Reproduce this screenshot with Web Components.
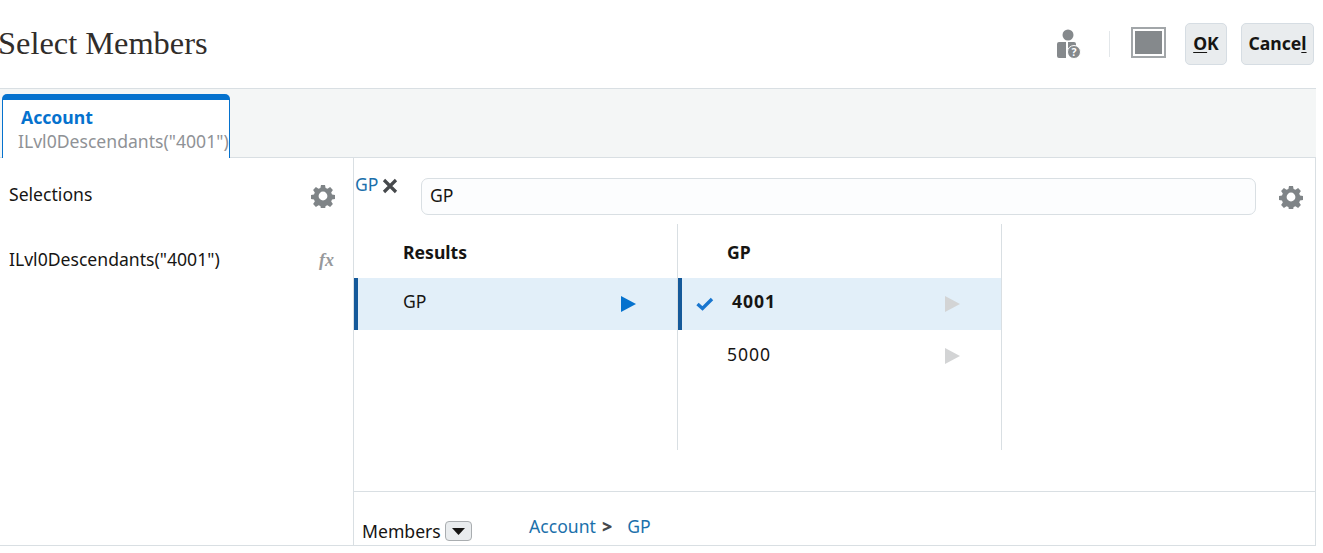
<!DOCTYPE html>
<html lang="en">
<head>
<meta charset="utf-8">
<title>Select Members</title>
<style>
  html, body { margin: 0; background: #fff; }
  body { width: 1323px; height: 553px; overflow: hidden; font: 17.6px "Noto Sans", sans-serif; color: #161513; }
</style>
</head>
<body>
<select-members></select-members>
<script>
const GEAR = `<svg width="24" height="24" viewBox="0 0 24 24"><path fill="#7f8487" fill-rule="evenodd" d="M10 1h4l.6 3 1.9.8 2.6-1.7 2.8 2.8-1.7 2.6.8 1.9 3 .6v4l-3 .6-.8 1.9 1.7 2.6-2.8 2.8-2.6-1.7-1.9.8-.6 3h-4l-.6-3-1.9-.8-2.6 1.7-2.8-2.8 1.7-2.6-.8-1.9-3-.6v-4l3-.6.8-1.9-1.7-2.6 2.8-2.8 2.6 1.7 1.9-.8zM12 7.6a4.4 4.4 0 1 0 0 8.8 4.4 4.4 0 0 0 0-8.8z"/></svg>`;

class SmButton extends HTMLElement {
  constructor() {
    super();
    this.attachShadow({ mode: 'open' }).innerHTML = `
      <style>
        :host { display: inline-flex; align-items: center; justify-content: center; box-sizing: border-box; height: 42px; padding: 0 0 3px; background: #e9ecee; border: 1px solid #d6dde3; border-radius: 5px; font: 700 17.6px "Noto Sans", sans-serif; color: #161513; }
      </style><slot></slot>`;
  }
}

class SmHeader extends HTMLElement {
  constructor() {
    super();
    this.attachShadow({ mode: 'open' }).innerHTML = `
      <style>
        :host { display: flex; align-items: center; box-sizing: border-box; height: 88px; padding: 0 2px 0 0; }
        h1 { margin: 0 auto 0 -2px; padding-bottom: 2px; font: 400 32.4px "Liberation Serif", Georgia, serif; color: #312d2a; }
        .help { display: block; margin-right: 27px; }
        .sep { width: 1px; height: 26px; background: #e3e7ea; margin-right: 21px; }
        .max { box-sizing: border-box; width: 35px; height: 31px; border: 2px solid #a2a6a9; padding: 2px; margin: 0 19px 3px 0; }
        .max div { height: 100%; background: #85898c; }
        .ok { width: 42px; margin-right: 14px; }
        .cancel { width: 73px; }
        u { text-underline-offset: 2px; }
      </style>
      <h1>Select Members</h1>
      <svg class="help" width="25" height="30" viewBox="0 0 25 30">
        <circle cx="11" cy="6" r="5.5" fill="#85898c"/>
        <path fill="#85898c" d="M0 15q0-2 2-2h7v16H2q-2 0-2-2zM11 13h6q2 0 2 2v4l-8 6z"/>
        <circle cx="17" cy="23" r="6.5" fill="#85898c" stroke="#fff" stroke-width="1"/>
        <text x="17" y="27" font-family="Noto Sans" font-size="10.5" font-weight="700" fill="#fff" text-anchor="middle">?</text>
      </svg>
      <div class="sep"></div>
      <div class="max"><div></div></div>
      <sm-button class="ok"><span><u>O</u>K</span></sm-button>
      <sm-button class="cancel"><span>Cance<u>l</u></span></sm-button>`;
  }
}

class SmTabs extends HTMLElement {
  constructor() {
    super();
    this.attachShadow({ mode: 'open' }).innerHTML = `
      <style>
        :host { display: flex; align-items: flex-end; box-sizing: border-box; height: 70px; padding-left: 2px; background: #f4f6f6; border-top: 1px solid #d9dfe3; border-bottom: 1px solid #d9dfe3; }
        .tab { box-sizing: border-box; width: 228px; height: 64px; margin-bottom: -1px; background: #fff; border: solid #0572ce; border-width: 6px 1px 0; border-radius: 5px 5px 0 0; line-height: 24px; white-space: nowrap; }
        .name { padding: 5px 0 0 18px; font-weight: 700; color: #0572ce; }
        .expr { padding-left: 15px; color: #8f9296; }
      </style>
      <div class="tab"><div class="name">Account</div><div class="expr">ILvl0Descendants("4001")</div></div>`;
  }
}

class SmSelections extends HTMLElement {
  constructor() {
    super();
    this.attachShadow({ mode: 'open' }).innerHTML = `
      <style>
        :host { display: block; box-sizing: border-box; width: 354px; padding: 26px 18px 0 9px; border-right: 1px solid #d9dfe3; }
        .row { display: flex; align-items: center; justify-content: space-between; height: 24px; }
        .row + .row { margin-top: 41px; }
        .first { padding-bottom: 4px; }
        .second { padding-bottom: 4px; }
        .fx { font: italic 700 18px "Liberation Serif", serif; color: #97999c; padding: 0 1px 2px 0; }
      </style>
      <div class="row"><span class="first">Selections</span>${GEAR}</div>
      <div class="row"><span class="second">ILvl0Descendants("4001")</span><span class="fx">fx</span></div>`;
  }
}

class SmSearch extends HTMLElement {
  constructor() {
    super();
    this.attachShadow({ mode: 'open' }).innerHTML = `
      <style>
        :host { display: flex; align-items: flex-start; box-sizing: border-box; height: 66px; padding: 14px 12px 0 1px; }
        .chip { display: flex; align-items: flex-start; width: 66px; height: 24px; line-height: 24px; color: #1b70ab; }
        .chip svg { margin: 6px 0 0 4px; }
        .box { flex: 1; box-sizing: border-box; height: 37px; margin: 6px 23px 0 0; padding: 0 8px; line-height: 33px; background: #fcfdfe; border: 1px solid #d9dfe3; border-radius: 7px; }
        .gear { margin-top: 13px; }
      </style>
      <div class="chip">GP<svg width="16" height="16" viewBox="0 0 16 16"><path stroke="#46494c" stroke-width="3.2" d="M2 2l12 12M14 2L2 14"/></svg></div>
      <div class="box">GP</div>
      <div class="gear">${GEAR}</div>`;
  }
}

class SmRow extends HTMLElement {
  constructor() {
    super();
    const on = this.hasAttribute('selected');
    const arrow = this.getAttribute('arrow') || '#d3d4d5';
    this.attachShadow({ mode: 'open' }).innerHTML = `
      <style>
        :host { display: flex; align-items: center; box-sizing: border-box; height: 52px; background: ${on ? '#e2eff9' : 'transparent'}; border-left: 4px solid ${on ? '#14599a' : 'transparent'}; }
        .mark { width: var(--mark-w, 45px); flex: none; display: flex; padding-left: 14px; box-sizing: border-box; }
        .text { flex: 1; padding-bottom: ${this.getAttribute('lift') || 6}px; }
        .arrow { margin-right: var(--arrow-r, 41px); }
      </style>
      <div class="mark"><slot name="mark"></slot></div>
      <div class="text"><slot></slot></div>
      <svg class="arrow" width="15" height="16" viewBox="0 0 15 16"><path fill="${arrow}" d="M0 0l15 8-15 8z"/></svg>`;
  }
}

class SmColumn extends HTMLElement {
  constructor() {
    super();
    this.attachShadow({ mode: 'open' }).innerHTML = `
      <style>
        :host { display: block; box-sizing: border-box; width: 324px; height: 226px; border-right: 1px solid #d9dfe3; }
        .head { height: 54px; box-sizing: border-box; padding: 15px 0 0 49px; line-height: 26px; font-weight: 700; }
      </style>
      <div class="head">${this.getAttribute('heading')}</div><slot></slot>`;
  }
}

class SmBreadcrumb extends HTMLElement {
  constructor() {
    super();
    this.attachShadow({ mode: 'open' }).innerHTML = `
      <style>
        :host { display: flex; align-items: flex-start; box-sizing: border-box; height: 54px; border-top: 1px solid #d9dfe3; padding: 22px 0 0 8px; line-height: 24px; }
        .label { width: 167px; display: flex; align-items: center; padding-top: 5px; height: 24px; }
        .drop { display: flex; align-items: center; justify-content: center; box-sizing: border-box; width: 27px; height: 20px; margin-left: 4px; background: #e9ecee; border: 1px solid #a9adb0; border-radius: 4px; }
        a { color: #1b70ab; }
        b { margin: 0 15px 0 6px; font-weight: 900; color: #46494c; }
      </style>
      <div class="label">Members<span class="drop"><svg width="13" height="7" viewBox="0 0 13 7"><path d="M0 0h13L6.5 7z" fill="#161513"/></svg></span></div>
      <a>Account</a><b>&gt;</b><a>GP</a>`;
  }
}

class SelectMembers extends HTMLElement {
  constructor() {
    super();
    this.attachShadow({ mode: 'open' }).innerHTML = `
      <style>
        :host { display: block; width: 1316px; }
        .main { display: flex; height: 387px; border-bottom: 1px solid #d9dfe3; border-right: 1px solid #d9dfe3; }
        .browser { flex: 1; display: flex; flex-direction: column; min-width: 0; }
        .cols { display: flex; flex: 1; align-items: flex-start; }
        .second { --mark-w: 50px; --arrow-r: 41px; }
        .strong { font-weight: 700; }
        .digits { letter-spacing: .9px; }
        .mark { display: block; }
      </style>
      <sm-header></sm-header>
      <sm-tabs></sm-tabs>
      <div class="main">
        <sm-selections></sm-selections>
        <div class="browser">
          <sm-search></sm-search>
          <div class="cols">
            <sm-column heading="Results">
              <sm-row selected arrow="#0572ce">GP</sm-row>
            </sm-column>
            <sm-column heading="GP" class="second">
              <sm-row selected><svg slot="mark" class="mark" width="18" height="14" viewBox="0 0 18 14"><path fill="none" stroke="#1976cf" stroke-width="3.4" d="M1.5 7l5 4.5L16 2"/></svg><span class="strong digits">4001</span></sm-row>
              <sm-row lift="4" style="--mark-w: 45px"><span class="digits">5000</span></sm-row>
            </sm-column>
          </div>
          <sm-breadcrumb></sm-breadcrumb>
        </div>
      </div>`;
  }
}

customElements.define('sm-button', SmButton);
customElements.define('sm-header', SmHeader);
customElements.define('sm-tabs', SmTabs);
customElements.define('sm-selections', SmSelections);
customElements.define('sm-search', SmSearch);
customElements.define('sm-row', SmRow);
customElements.define('sm-column', SmColumn);
customElements.define('sm-breadcrumb', SmBreadcrumb);
customElements.define('select-members', SelectMembers);
</script>
</body>
</html>
